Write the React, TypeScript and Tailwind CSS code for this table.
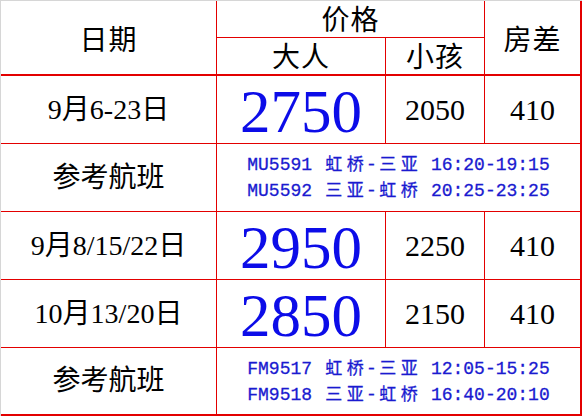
import React from "react";

const serif = "font-['Liberation_Serif','Noto_Sans_CJK_SC',serif]";
const mono = "font-['Liberation_Mono','Noto_Sans_CJK_SC',monospace]";

interface CellProps {
    className?: string;
    children?: React.ReactNode;
}

const Cell = ({ className = "", children }: CellProps) => (
    <div className={`flex items-center justify-center bg-white border-[#e30000] ${className}`}>
        {children}
    </div>
);

// full-width characters take two mono columns, like SimSun
const Cjk = ({ text }: { text: string }) => (
    <>
        {text.split("").map((ch, i) => (
            <span key={i} className="inline-block w-[21.6px] text-center text-[17px]">
                {ch}
            </span>
        ))}
    </>
);

type Flight = [string, string, string, string];

const Flights = ({ lines, className }: { lines: Flight[]; className: string }) => (
    <Cell className={`col-span-3 border-r-2 ${className}`}>
        <div className={`flex flex-col items-center gap-[1px] ${mono} text-[18px] leading-[24px] text-[#1a1ad0] pt-[2px] [-webkit-text-stroke:0.3px_#1a1ad0]`}>
            {lines.map(([code, a, b, time]) => (
                <div key={code} className="whitespace-pre">
                    {code} <Cjk text={a} />-<Cjk text={b} /> {time}
                </div>
            ))}
        </div>
    </Cell>
);

interface PriceRowProps {
    date: string;
    adult: string;
    child: string;
    room: string;
}

const PriceRow = ({ date, adult, child, room }: PriceRowProps) => (
    <>
        <Cell className="border-b border-r text-[28px] text-black">{date}</Cell>
        <Cell className="border-b border-r text-[61px] leading-none text-[#0c0ce8] pt-[4px]">{adult}</Cell>
        <Cell className="border-b border-r text-[30px] text-black">{child}</Cell>
        <Cell className="border-b border-r-2 text-[30px] text-black">{room}</Cell>
    </>
);

export default function App() {
    return (
        <div className="w-[584px] h-[416px] bg-white overflow-hidden">
            <div
                className={`inline-grid grid-cols-[216px_169px_99px_97px] grid-rows-[37px_38px_68px_68px_68px_68px_68px] border-l border-t border-[#d6d6d6] ${serif}`}
            >
                <Cell className="row-span-2 border-b-2 border-r text-[28px] tracking-[1px] text-black pt-[6px]">日期</Cell>
                <Cell className="col-span-2 border-b border-r text-[28px] tracking-[1px] text-black pt-[4px]">价格</Cell>
                <Cell className="row-span-2 border-b-2 border-r-2 text-[28px] tracking-[1px] text-black pt-[6px]">房差</Cell>
                <Cell className="border-b-2 border-r text-[28px] tracking-[1px] text-black pt-[4px]">大人</Cell>
                <Cell className="border-b-2 border-r text-[28px] tracking-[1px] text-black pt-[4px]">小孩</Cell>

                <PriceRow date="9月6-23日" adult="2750" child="2050" room="410" />

                <Cell className="border-b border-r text-[28px] text-black">参考航班</Cell>
                <Flights
                    className="border-b"
                    lines={[
                        ["MU5591", "虹桥", "三亚", "16:20-19:15"],
                        ["MU5592", "三亚", "虹桥", "20:25-23:25"],
                    ]}
                />

                <PriceRow date="9月8/15/22日" adult="2950" child="2250" room="410" />
                <PriceRow date="10月13/20日" adult="2850" child="2150" room="410" />

                <Cell className="border-b-2 border-r text-[28px] text-black">参考航班</Cell>
                <Flights
                    className="border-b-2"
                    lines={[
                        ["FM9517", "虹桥", "三亚", "12:05-15:25"],
                        ["FM9518", "三亚", "虹桥", "16:40-20:10"],
                    ]}
                />
            </div>
        </div>
    );
}
